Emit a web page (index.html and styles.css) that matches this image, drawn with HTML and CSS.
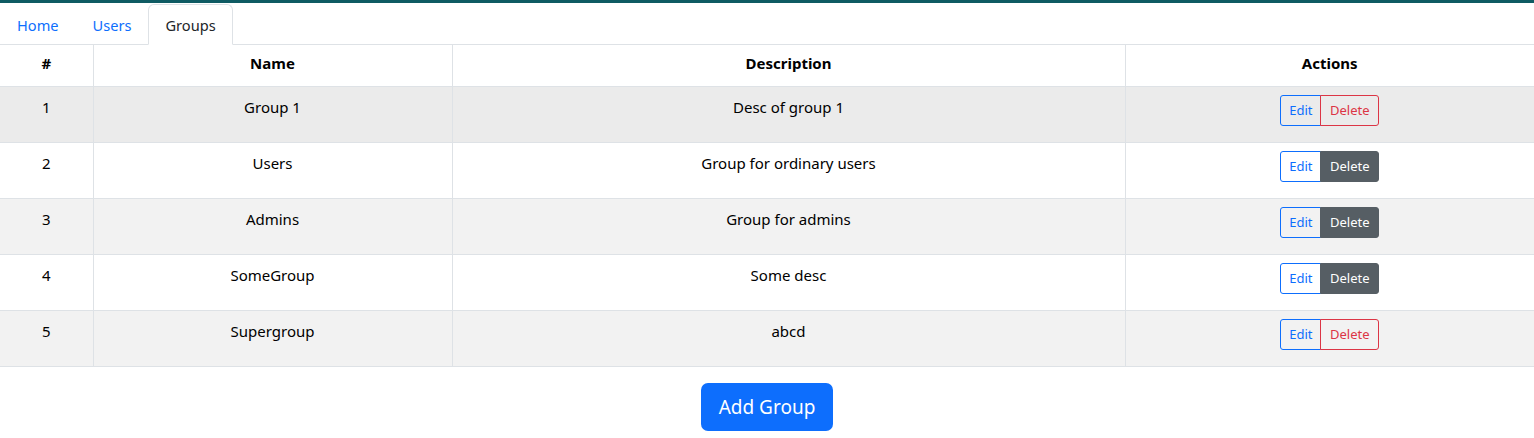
FILE: index.html
```html
<!DOCTYPE html>
<html>
<head>
<meta charset="utf-8">
<link rel="stylesheet" href="styles.css">
</head>
<body>
<div class="topbar"></div>
<nav class="tabs">
  <a class="tab">Home</a>
  <a class="tab">Users</a>
  <a class="tab active">Groups</a>
</nav>
<table class="grid">
  <thead>
    <tr><th class="c-id">#</th><th class="c-name">Name</th><th class="c-desc">Description</th><th>Actions</th></tr>
  </thead>
  <tbody>
    <tr class="hover"><td>1</td><td>Group 1</td><td>Desc of group 1</td><td><div class="btns"><button class="b edit">Edit</button><button class="b del-o">Delete</button></div></td></tr>
    <tr><td>2</td><td>Users</td><td>Group for ordinary users</td><td><div class="btns"><button class="b edit">Edit</button><button class="b del-s">Delete</button></div></td></tr>
    <tr class="odd"><td>3</td><td>Admins</td><td>Group for admins</td><td><div class="btns"><button class="b edit">Edit</button><button class="b del-s">Delete</button></div></td></tr>
    <tr><td>4</td><td>SomeGroup</td><td>Some desc</td><td><div class="btns"><button class="b edit">Edit</button><button class="b del-s">Delete</button></div></td></tr>
    <tr class="odd"><td>5</td><td>Supergroup</td><td>abcd</td><td><div class="btns"><button class="b edit">Edit</button><button class="b del-o">Delete</button></div></td></tr>
  </tbody>
</table>
<div class="footer"><button class="add">Add Group</button></div>
</body>
</html>
```
FILE: styles.css
```css
* { box-sizing: border-box; }
body {
  margin: 0;
  font-family: "Noto Sans", "Open Sans", sans-serif;
  font-size: 15px;
  color: #212529;
  background: #fff;
}
.topbar { height: 3px; background: #0f5b63; }
.tabs {
  display: flex;
  height: 42px;
  border-bottom: 1px solid #dee2e6;
}
.tab {
  display: flex;
  align-items: center;
  padding: 0 16px;
  color: #0d6efd;
  font-size: 14.6px;
  border: 1px solid transparent;
  border-top-left-radius: 6px;
  border-top-right-radius: 6px;
  margin-top: 1px;
  margin-bottom: -1px;
}
.tab.active {
  color: #212529;
  background: #fff;
  border-color: #dee2e6 #dee2e6 #fff;
}
.grid {
  width: 100%;
  border-collapse: collapse;
  table-layout: fixed;
}
.c-id { width: 93px; }
.c-name { width: 359px; }
.c-desc { width: 673px; }
.grid th, .grid td {
  text-align: center;
  vertical-align: top;
  border-bottom: 1px solid #dee2e6;
  border-left: 1px solid #dee2e6;
}
.grid th:first-child, .grid td:first-child { border-left: none; }
.grid th {
  height: 41px;
  padding: 8px;
  font-weight: 700;
  color: #000;
}
.grid td {
  height: 56px;
  padding: 8px 8px 0;
  line-height: 24px;
  color: #000;
}
.grid tr.hover td { background: #ebebeb; }
.grid tr.odd td { background: #f2f2f2; }
.grid td:last-child { padding-top: 8px; }
.btns { display: inline-flex; }
.b {
  font-family: inherit;
  font-size: 13px;
  height: 31px;
  padding: 0 8px;
  border: 1px solid;
  background: transparent;
  cursor: pointer;
}
.edit {
  color: #0d6efd;
  border-color: #0d6efd;
  border-radius: 3px 0 0 3px;
  width: 41px;
}
.del-o {
  color: #dc3545;
  border-color: #dc3545;
  border-radius: 0 3px 3px 0;
  margin-left: -1px;
  width: 59px;
}
.del-s {
  color: #fff;
  background: #565e64;
  border-color: #565e64;
  border-radius: 0 3px 3px 0;
  margin-left: -1px;
  width: 59px;
}
.footer {
  display: flex;
  justify-content: center;
  padding-top: 16px;
}
.add {
  font-family: inherit;
  font-size: 19px;
  color: #fff;
  background: #0d6efd;
  border: none;
  border-radius: 7px;
  width: 132px;
  height: 48px;
}
```
